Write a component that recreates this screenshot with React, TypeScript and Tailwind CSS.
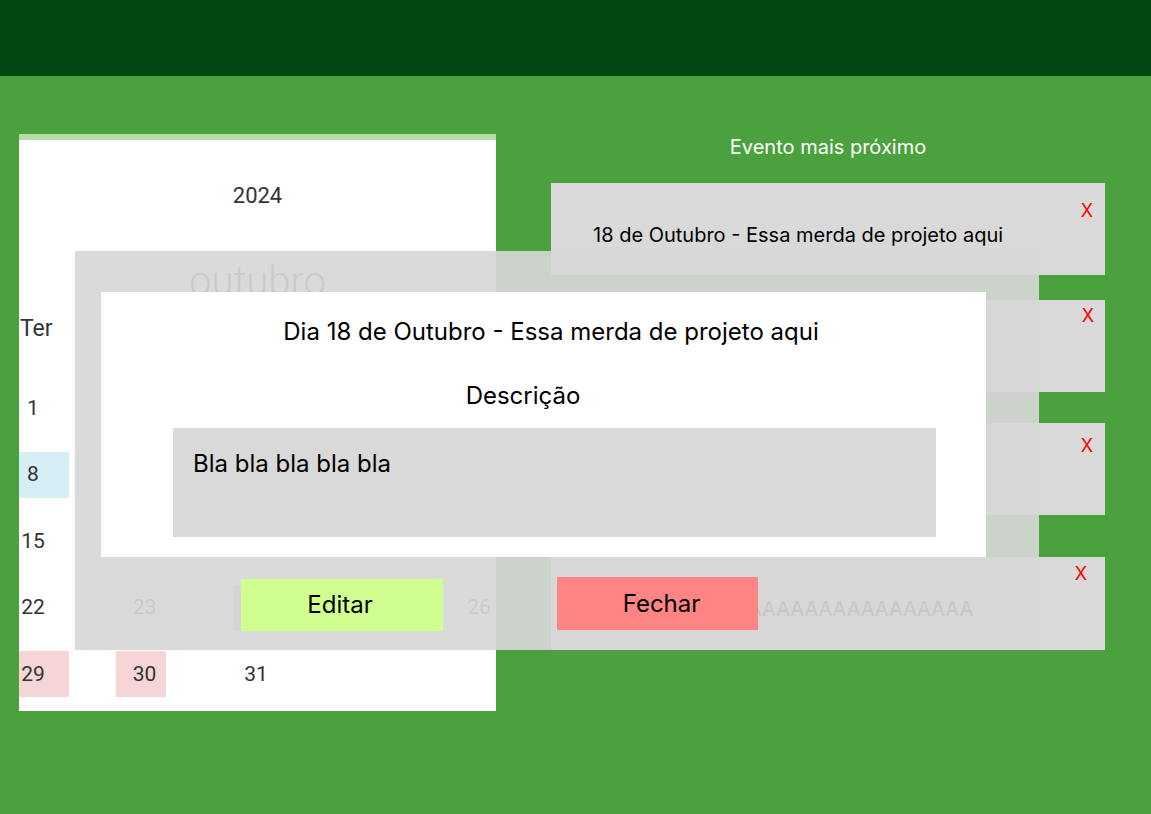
import React from 'react';

const inter = "font-['Inter','Noto_Sans',sans-serif]";
const roboto = "font-['Roboto','Liberation_Sans',sans-serif]";

type Day = { n: number; bg?: string; off?: number };

const weekdays = ['Ter', 'Qua', 'Qui', 'Sex', 'Sáb', 'Dom', 'Seg'];

const weeks: Day[][] = [
  [{ n: 1 }, { n: 2 }, { n: 3 }, { n: 4 }, { n: 5 }, { n: 6 }, { n: 7 }],
  [{ n: 8, bg: 'bg-[#d5eff4]' }, { n: 9 }, { n: 10 }, { n: 11 }, { n: 12 }, { n: 13 }, { n: 14 }],
  [{ n: 15 }, { n: 16 }, { n: 17 }, { n: 18 }, { n: 19 }, { n: 20 }, { n: 21 }],
  [{ n: 22 }, { n: 23 }, { n: 24, bg: 'bg-[#c4c4c4]', off: 9 }, { n: 25 }, { n: 26 }, { n: 27 }, { n: 28 }],
  [{ n: 29, bg: 'bg-[#f5d5d6]' }, { n: 30, bg: 'bg-[#f5d5d6]' }, { n: 31 }],
];

const DayCell: React.FC<{ day: Day; col: number }> = ({ day, col }) => {
  const off = col === 0 ? 0 : day.off ?? 14.5;
  return (
    <div className="flex items-center h-full">
      <div
        className={`flex items-center h-[46px] w-[50px] shrink-0 ${day.bg ?? ''}`}
        style={{ marginLeft: -off, paddingLeft: off }}
      >
        <span className="w-[28px] text-center">{day.n}</span>
      </div>
    </div>
  );
};

const Calendar: React.FC = () => (
  <div className={`w-[477px] h-[577px] bg-white flex flex-col overflow-hidden shrink-0 text-[#333] ${roboto}`}>
    <div className="h-[6px] bg-[#b8dca8]" />
    <div className="mt-[43px] text-center text-[22px] leading-[26px]">2024</div>
    <div className="mt-[49px] text-center text-[40px] leading-[48px] font-light">outubro</div>
    <div className="grid grid-cols-[repeat(7,111.5px)] h-[46px] text-[23px] items-center">
      {weekdays.map((w) => (
        <span key={w} className="pl-px">{w}</span>
      ))}
    </div>
    <div className="mt-[23px] flex flex-col text-[21px]">
      {weeks.map((week, i) => (
        <div key={i} className="grid grid-cols-[repeat(7,111.5px)] h-[66.5px]">
          {week.map((d, c) => (
            <DayCell key={d.n} day={d} col={c} />
          ))}
        </div>
      ))}
    </div>
  </div>
);

const EventCard: React.FC<{ text: string; xTop: number; xRight: number; mt: number; h?: number }> = ({
  text,
  xTop,
  xRight,
  mt,
  h = 92,
}) => (
  <div className="bg-[#d9d9d9] w-[554px] flex flex-col" style={{ marginTop: mt, height: h }}>
    <div className="flex justify-end" style={{ paddingTop: xTop - 11, paddingRight: xRight }}>
      <span className="text-[18px] leading-[22px] text-[#ff0000]">X</span>
    </div>
    <div
      className="pl-[42px] text-[20px] leading-[24px] text-black whitespace-nowrap overflow-hidden"
      style={{ marginTop: 52 - 22 - 12 - (xTop - 11) }}
    >
      {text}
    </div>
  </div>
);

export default function App() {
  return (
    <div className={`relative w-full min-h-[814px] bg-[#4ba13e] ${inter}`}>
      <header className="h-[76px] bg-[#034812]" />

      <main className="flex items-start">
        <div className="ml-[19px] mt-[58px]">
          <Calendar />
        </div>

        <section className="ml-[55px] w-[554px] flex flex-col">
          <h2 className="mt-[59px] text-center text-white text-[20px] leading-[24px] font-normal">
            Evento mais próximo
          </h2>
          <EventCard text="18 de Outubro - Essa merda de projeto aqui" xTop={28} xRight={12} mt={24} />
          <EventCard text="25 de Outubro - Entrega do projeto" xTop={16} xRight={11} mt={25} />
          <EventCard text="30 de Outubro - Apresentação final" xTop={23} xRight={12} mt={31} />
          <EventCard text="AAAAAAAAAAAAAAAAAAAAAAAAAAA" xTop={17} xRight={18} mt={42} h={93} />
        </section>
      </main>

      {/* modal */}
      <div className="absolute left-[75px] top-[251px] w-[964px] h-[399px] bg-[#d7d7d7]/92 flex flex-col pl-[26px] pt-[41px]">
        <div className="w-[885px] h-[265px] bg-white flex flex-col items-center text-black">
          <h3 className="mt-[25px] pl-[15px] text-[24px] leading-[29px] font-normal">
            Dia 18 de Outubro - Essa merda de projeto aqui
          </h3>
          <p className="mt-[35px] pr-[41px] text-[24px] leading-[29px]">Descrição</p>
          <div className="mt-[18px] self-start ml-[72px] w-[763px] h-[109px] bg-[#d9d9d9] pl-[20px] pt-[21px] text-[24px] leading-[29px]">
            Bla bla bla bla bla
          </div>
        </div>
        <div className="mt-[20px] flex items-start text-[24px] text-black">
          <button className="ml-[140px] mt-[2px] w-[202px] h-[52px] pr-[4px] bg-[#d1ff8f] flex items-center justify-center">
            Editar
          </button>
          <button className="ml-[114px] w-[201px] h-[53px] pl-[8px] bg-[#ff8585] flex items-center justify-center">
            Fechar
          </button>
        </div>
      </div>
    </div>
  );
}
